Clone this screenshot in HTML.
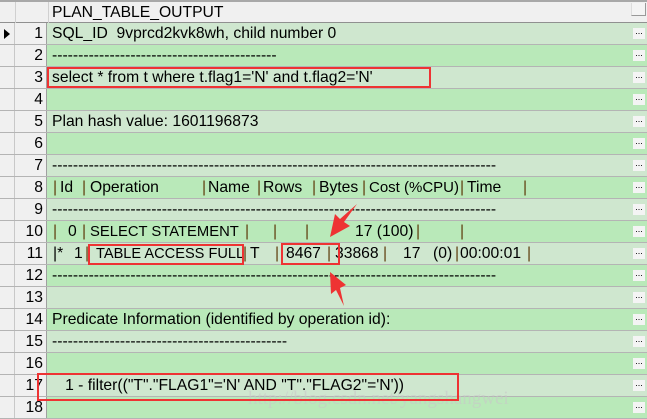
<!DOCTYPE html><html><head><style>
body{margin:0;width:647px;height:418px;overflow:hidden;background:#fff;font-family:"Liberation Sans","Noto Sans CJK SC",sans-serif;font-size:15.7px;color:#000;position:relative}
.r{position:absolute;left:0;width:647px;height:22px;border-bottom:1px solid #b4b4b4;box-sizing:border-box}
.o{background:#cfe7cf}.e{background:#b9e9b9}
.ind{position:absolute;left:0;top:0;width:15px;height:100%;background:#f0f0f0;border-right:1px solid #c8c8c8;box-sizing:border-box}
.num{position:absolute;left:15px;top:0;width:32px;height:100%;background:#f0f0f0;border-right:1px solid #a0a0a0;box-sizing:border-box;text-align:right;padding-right:3px;line-height:22px}
.t{position:absolute;left:52px;top:0;line-height:22px;white-space:pre}
.s{position:absolute;top:0;line-height:22px;white-space:pre}
.p{color:#604010}
.b{position:absolute;right:2px;top:5px;width:12px;height:11px;background:#f4f4f4;font-size:9px;line-height:6px;text-align:center;color:#000}
.box{position:absolute;border:2.5px solid #ee3333;box-sizing:border-box}
</style></head><body>
<div style="position:absolute;left:0;top:0;width:647px;height:23px;background:#f0f0f0;border-top:2px solid #a8a8a8;border-bottom:1px solid #909090;box-sizing:border-box">
<div style="position:absolute;left:15px;top:0;width:32px;height:21px;border-left:1px solid #d0d0d0;border-right:1px solid #d0d0d0"></div>
<div style="position:absolute;left:52px;top:0;line-height:21px">PLAN_TABLE_OUTPUT</div>
<div style="position:absolute;right:1px;top:1px;width:13px;height:12px;border-left:1px solid #ddd;border-bottom:1px solid #999;border-right:1px solid #999;background:#f4f4f4"></div>
</div>

<div class="r o" style="top:23px"><div class="ind"><span style="position:absolute;left:4px;top:6px;border-left:6px solid #000;border-top:5px solid transparent;border-bottom:5px solid transparent"></span></div><div class="num">1</div><div class="t">SQL_ID  9vprcd2kvk8wh, child number 0</div><div class="b">...</div></div>
<div class="r e" style="top:45px"><div class="ind"></div><div class="num">2</div><div class="t">-------------------------------------------</div><div class="b">...</div></div>
<div class="r o" style="top:67px"><div class="ind"></div><div class="num">3</div><div class="t">select * from t where t.flag1='N' and t.flag2='N'</div><div class="b">...</div></div>
<div class="r e" style="top:89px"><div class="ind"></div><div class="num">4</div><div class="b">...</div></div>
<div class="r o" style="top:111px"><div class="ind"></div><div class="num">5</div><div class="t">Plan hash value: 1601196873</div><div class="b">...</div></div>
<div class="r e" style="top:133px"><div class="ind"></div><div class="num">6</div><div class="b">...</div></div>
<div class="r o" style="top:155px"><div class="ind"></div><div class="num">7</div><div class="t">-------------------------------------------------------------------------------------</div><div class="b">...</div></div>
<div class="r e" style="top:177px"><div class="ind"></div><div class="num">8</div>
<span class="s p" style="left:53px">|</span><span class="s" style="left:60px">Id</span><span class="s p" style="left:82px">|</span><span class="s" style="left:90px">Operation</span><span class="s p" style="left:202px">|</span><span class="s" style="left:208px">Name</span><span class="s p" style="left:257px">|</span><span class="s" style="left:263px">Rows</span><span class="s p" style="left:312px">|</span><span class="s" style="left:319px">Bytes</span><span class="s p" style="left:362px">|</span><span class="s" style="left:369px;font-size:15px">Cost (%CPU)</span><span class="s p" style="left:460px">|</span><span class="s" style="left:467px">Time</span><span class="s p" style="left:523px">|</span>
<div class="b">...</div></div>
<div class="r o" style="top:199px"><div class="ind"></div><div class="num">9</div><div class="t">-------------------------------------------------------------------------------------</div><div class="b">...</div></div>
<div class="r e" style="top:221px"><div class="ind"></div><div class="num">10</div>
<span class="s p" style="left:53px">|</span><span class="s" style="left:68px">0</span><span class="s p" style="left:82px">|</span><span class="s" style="left:90px;font-size:14.8px">SELECT STATEMENT</span><span class="s p" style="left:245px">|</span><span class="s p" style="left:273px">|</span><span class="s p" style="left:305px">|</span><span class="s" style="left:355px">17 (100)</span><span class="s p" style="left:416px">|</span><span class="s p" style="left:460px">|</span>
<div class="b">...</div></div>
<div class="r o" style="top:243px"><div class="ind"></div><div class="num">11</div>
<span class="s" style="left:53px">|*</span><span class="s" style="left:74px">1</span><span class="s p" style="left:85px">|</span><span class="s" style="left:96px;font-size:14.6px">TABLE ACCESS FULL</span><span class="s p" style="left:243px">|</span><span class="s" style="left:250px">T</span><span class="s p" style="left:275px">|</span><span class="s" style="left:286px">8467</span><span class="s p" style="left:327px">|</span><span class="s" style="left:335px">33868</span><span class="s p" style="left:383px">|</span><span class="s" style="left:403px">17</span><span class="s" style="left:433px">(0)</span><span class="s p" style="left:455px">|</span><span class="s" style="left:460px">00:00:01</span><span class="s p" style="left:527px">|</span>
<div class="b">...</div></div>
<div class="r e" style="top:265px"><div class="ind"></div><div class="num">12</div><div class="t">-------------------------------------------------------------------------------------</div><div class="b">...</div></div>
<div class="r o" style="top:287px"><div class="ind"></div><div class="num">13</div><div class="b">...</div></div>
<div class="r e" style="top:309px"><div class="ind"></div><div class="num">14</div><div class="t">Predicate Information (identified by operation id):</div><div class="b">...</div></div>
<div class="r o" style="top:331px"><div class="ind"></div><div class="num">15</div><div class="t">---------------------------------------------</div><div class="b">...</div></div>
<div class="r e" style="top:353px"><div class="ind"></div><div class="num">16</div><div class="b">...</div></div>
<div class="r o" style="top:375px"><div class="ind"></div><div class="num">17</div><div class="t">   1 - filter(("T"."FLAG1"='N' AND "T"."FLAG2"='N'))</div><div class="b">...</div></div>
<div class="r e" style="top:397px"><div class="ind"></div><div class="num">18</div><div class="b">...</div></div>

<div style="position:absolute;left:248px;top:388px;font-family:'Liberation Serif',serif;font-size:19px;color:rgba(200,200,200,0.6);line-height:22px;white-space:pre">http://blog.csdn.net/yangshangwei</div>

<div class="box" style="left:47px;top:67px;width:384px;height:21px"></div>
<div class="box" style="left:88px;top:244px;width:156px;height:21px"></div>
<div class="box" style="left:281px;top:243px;width:59px;height:22px"></div>
<div class="box" style="left:37px;top:373px;width:422px;height:28px"></div>
<svg style="position:absolute;left:0;top:0" width="647" height="418">
<polygon points="357,204 344,222 350,226 330,237 335,214 340,219" fill="#ee3333"/>
<polygon points="330,272 346,285 340,288 344,306 336,290 331,294" fill="#ee3333"/>
</svg>
</body></html>
